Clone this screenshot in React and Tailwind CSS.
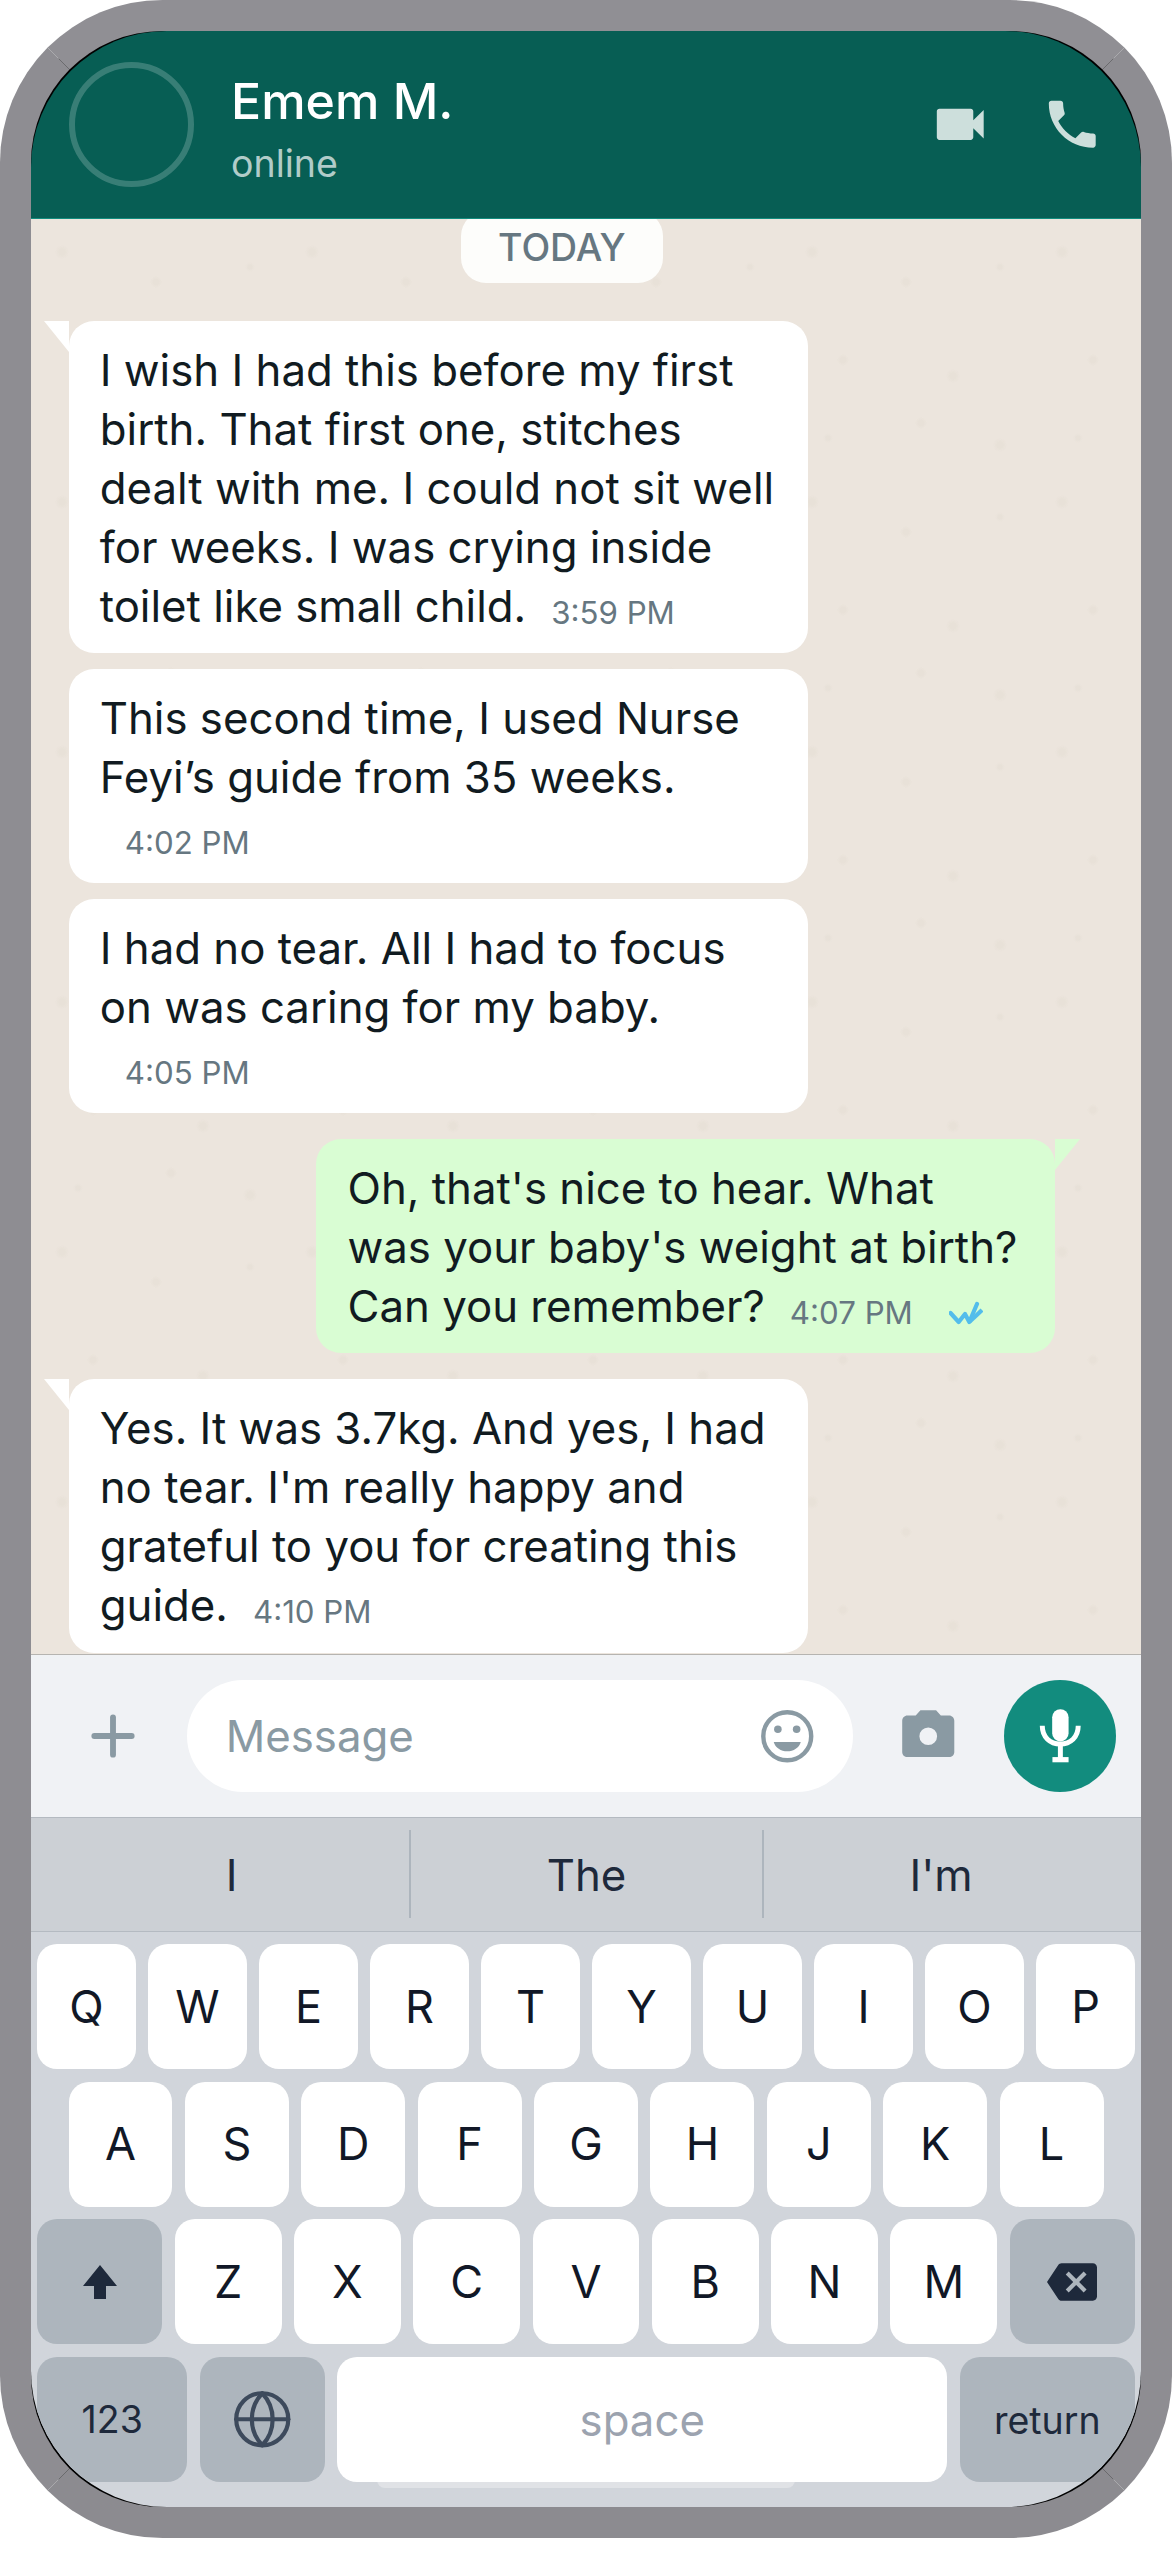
import React from "react";
import { Globe, Plus } from "lucide-react";

function VideoIcon() {
  return (
    <svg viewBox="0 0 24 24" className="w-[62.5px] h-[62.5px] fill-[#cddfdc]">
      <path d="M17 10.5V7c0-.55-.45-1-1-1H4c-.55 0-1 .45-1 1v10c0 .55.45 1 1 1h12c.55 0 1-.45 1-1v-3.5l4 4v-11l-4 4z" />
    </svg>
  );
}
function PhoneIcon() {
  return (
    <svg viewBox="0 0 24 24" className="w-[62.5px] h-[62.5px] fill-[#cddfdc]">
      <path d="M6.62 10.79c1.44 2.83 3.76 5.14 6.59 6.59l2.2-2.2c.27-.27.67-.36 1.02-.24 1.12.37 2.33.57 3.57.57.55 0 1 .45 1 1V20c0 .55-.45 1-1 1-9.39 0-17-7.61-17-17 0-.55.45-1 1-1h3.5c.55 0 1 .45 1 1 0 1.25.2 2.45.57 3.57.11.35.03.74-.25 1.01l-2.2 2.2z" />
    </svg>
  );
}
function SmileIcon() {
  return (
    <svg viewBox="0 0 24 24" className="w-[62.5px] h-[62.5px]">
      <circle cx="12" cy="12" r="9.2" fill="none" stroke="#8a9aa3" strokeWidth="1.7" />
      <circle cx="8.4" cy="9.3" r="1.45" fill="#8a9aa3" />
      <circle cx="15.6" cy="9.3" r="1.45" fill="#8a9aa3" />
      <path d="M6.8 14.2h10.4c-.6 2.2-2.8 3.6-5.2 3.6s-4.6-1.4-5.2-3.6z" fill="#8a9aa3" />
    </svg>
  );
}
function CameraIcon() {
  return (
    <svg viewBox="0 0 24 24" className="w-[62.5px] h-[62.5px] fill-[#8a9aa3]">
      <path
        fillRule="evenodd"
        d="M9 2L7.17 4H4c-1.1 0-2 .9-2 2v12c0 1.1.9 2 2 2h16c1.1 0 2-.9 2-2V6c0-1.1-.9-2-2-2h-3.17L15 2H9zM12 8.6a3.4 3.4 0 1 1 0 6.8 3.4 3.4 0 0 1 0-6.8z"
      />
    </svg>
  );
}
function MicIcon() {
  return (
    <svg viewBox="0 0 24 24" className="w-[62.5px] h-[62.5px]">
      <rect x="8.9" y="1.6" width="6.3" height="12.4" rx="3.15" fill="#fff" />
      <path d="M5.1 8c0 4.4 3 7 6.9 7s6.9-2.6 6.9-7" fill="none" stroke="#fff" strokeWidth="1.9" />
      <rect x="11.1" y="15" width="1.9" height="5.5" fill="#fff" />
      <rect x="9" y="20" width="6.2" height="2" fill="#fff" />
    </svg>
  );
}
function ShiftIcon() {
  return (
    <svg viewBox="0 0 50 50" className="w-[50px] h-[50px] fill-[#1e293b]">
      <path d="M25 8L42 29H31V42H19V29H8z" />
    </svg>
  );
}
function BackspaceIcon() {
  return (
    <svg viewBox="0 0 24 24" className="w-[50px] h-[50px] fill-[#1e293b]">
      <path d="M22 3H7c-.69 0-1.23.35-1.59.88L0 12l5.41 8.11c.36.53.9.89 1.59.89h15c1.1 0 2-.9 2-2V5c0-1.1-.9-2-2-2zm-3 12.59L17.59 17 14 13.41 10.41 17 9 15.59 12.59 12 9 8.41 10.41 7 14 10.59 17.59 7 19 8.41 15.41 12 19 15.59z" />
    </svg>
  );
}
function Ticks() {
  return (
    <svg viewBox="0 0 34 24" className="inline-block ml-[36px] w-[34px] h-[24px] align-[-3px]">
      <path d="M1.5 12L9.7 21L16 13L20.3 21L28 3" fill="none" stroke="#53bdeb" strokeWidth="4.2" strokeLinecap="round" strokeLinejoin="round" />
      <path d="M20.3 21L33 9" fill="none" stroke="#53bdeb" strokeWidth="4.2" />
    </svg>
  );
}

function Time({ children }) {
  return (
    <span className="inline-block whitespace-nowrap ml-[25px] text-[31.25px] leading-none align-[-2px] text-[#667781]">
      {children}
    </span>
  );
}

function Bubble({ children, out, tail, className }) {
  return (
    <div className={`relative w-[739px] shrink-0 rounded-[25px] px-[31.25px] pt-[19.75px] pb-[17.3px] text-[43.75px] leading-[59px] text-[#111b21] ${out ? "self-end bg-[#d9fdd3]" : "self-start bg-white"} ${className}`}>
      {tail && !out && (
        <div className="absolute top-0 left-[-25px] w-0 h-0 border-t-[31.25px] border-t-white border-l-[25px] border-l-transparent" />
      )}
      {tail && out && (
        <div className="absolute top-0 right-[-25px] w-0 h-0 border-t-[31.25px] border-t-[#d9fdd3] border-r-[25px] border-r-transparent" />
      )}
      {children}
    </div>
  );
}

function Key({ children, className = "" }) {
  return (
    <div className={`relative z-10 h-[125px] rounded-[20px] flex items-center justify-center ${className}`}>
      {children}
    </div>
  );
}
function Letter({ c }) {
  return <Key className="flex-1 bg-white text-[45px] text-[#111827]">{c}</Key>;
}

export default function App() {
  return (
    <div className="w-[1172px] h-[2537.5px] bg-white font-['Inter',sans-serif]">
      <div className="w-full h-full rounded-[162.5px] border-[31.25px] border-t-[#908f94] border-x-[#8e8d92] border-b-[#8c8b90] bg-black">
        <div className="w-full h-full rounded-[136px] overflow-hidden flex flex-col">
          <header className="h-[187.5px] shrink-0 bg-[#075e54] border-b-[1px] border-[#128c7e] flex items-center px-[37.5px] gap-[37.5px]">
            <div className="w-[125px] h-[125px] rounded-full border-[6px] border-white/20 shrink-0" />
            <div className="flex-1 flex flex-col pt-[3px]">
              <div className="text-[50px] leading-[76.5px] font-medium text-white">Emem M.</div>
              <div className="text-[37.5px] leading-[50px] text-white/70">online</div>
            </div>
            <div className="flex items-center gap-[50px]">
              <VideoIcon />
              <PhoneIcon />
            </div>
          </header>

          <main className="flex-1 min-h-0 overflow-hidden flex flex-col justify-end pb-[1.5px] pl-[37.5px] pr-[85.75px] bg-[#ece5dd] bg-[radial-gradient(circle_at_31px_33px,#e8e1d8_3px,transparent_7px),radial-gradient(circle_at_219px_48px,#e8e1d8_2px,transparent_5px),radial-gradient(circle_at_125px_63px,#e8e1d8_3px,transparent_6px),radial-gradient(circle_at_62px_141px,#e8e1d8_3px,transparent_6px),radial-gradient(circle_at_172px_157px,#e8e1d8_3px,transparent_7px),radial-gradient(circle_at_140px_204px,#e8e1d8_3px,transparent_6px),radial-gradient(circle_at_47px_219px,#e8e1d8_2px,transparent_5px),radial-gradient(circle_at_219px_226px,#e8e1d8_3px,transparent_7px)] bg-[length:250px_250px]">
            <div className="self-center shrink-0 w-[202px] h-[72px] pt-[2px] rounded-[25px] bg-[#fdfdfb] flex items-center justify-center text-[37.5px] font-medium text-[#667781] mb-[38px]">
              TODAY
            </div>
            <Bubble tail className="mb-[16px]">
              I wish I had this before my first birth. That first one, stitches dealt with me. I could not sit well for weeks. I was crying inside toilet like small child.<Time>3:59 PM</Time>
            </Bubble>
            <Bubble className="mb-[16px]">
              This second time, I used Nurse Feyi’s guide from 35 weeks.<br /><Time>4:02 PM</Time>
            </Bubble>
            <Bubble className="mb-[26px]">
              I had no tear. All I had to focus on was caring for my baby.<br /><Time>4:05 PM</Time>
            </Bubble>
            <Bubble out tail className="mb-[26px]">
              Oh, that's nice to hear. What was your baby's weight at birth? Can you remember?<Time>4:07 PM</Time><Ticks />
            </Bubble>
            <Bubble tail>
              Yes. It was 3.7kg. And yes, I had no tear. I'm really happy and grateful to you for creating this guide.<Time>4:10 PM</Time>
            </Bubble>
          </main>

          <div className="h-[162.5px] shrink-0 bg-[#f0f2f5] border-t-[1.5px] border-[#b6b4b0] flex items-center pr-[25px]">
            <div className="w-[156.25px] flex justify-center pl-[8px] shrink-0 text-[#8a9aa3]">
              <Plus size={64} strokeWidth={2.2} />
            </div>
            <div className="w-[665.5px] h-[112.5px] rounded-full bg-white flex items-center pl-[38.5px] pr-[34px] justify-between text-[43.75px] text-[#8a9aa3] shrink-0">
              <span className="pt-[3px]">Message</span>
              <SmileIcon />
            </div>
            <div className="flex-1 flex justify-center">
              <CameraIcon />
            </div>
            <div className="w-[112.5px] h-[112.5px] rounded-full bg-[#128c7e] flex items-center justify-center shrink-0">
              <MicIcon />
            </div>
          </div>

          <div className="h-[115px] shrink-0 bg-[#ccd0d5] border-y-[1.5px] border-y-[#b4bac1] flex items-center text-[43.75px] text-[#1e293b]">
            <div className="w-[378px] h-[88px] pt-[3px] pl-[23px] flex items-center justify-center">I</div>
            <div className="flex-1 h-[88px] pt-[3px] border-x-[2px] border-[#adb5bd] flex items-center justify-center">The</div>
            <div className="w-[377px] h-[88px] pt-[3px] pr-[23px] flex items-center justify-center">I'm</div>
          </div>

          <div className="relative h-[575px] shrink-0 bg-[#d1d5db] px-[6.25px] pt-[12.5px] flex flex-col gap-[12.5px]">
            <div className="flex gap-[12.5px]">
              {"QWERTYUIOP".split("").map((c) => <Letter key={c} c={c} />)}
            </div>
            <div className="flex gap-[12.5px] px-[31.25px]">
              {"ASDFGHJKL".split("").map((c) => <Letter key={c} c={c} />)}
            </div>
            <div className="flex gap-[12.5px]">
              <Key className="w-[125px] shrink-0 bg-[#adb5bd]"><ShiftIcon /></Key>
              {"ZXCVBNM".split("").map((c) => <Letter key={c} c={c} />)}
              <Key className="w-[125px] shrink-0 bg-[#adb5bd]"><BackspaceIcon /></Key>
            </div>
            <div className="flex gap-[12.5px]">
              <Key className="w-[150px] shrink-0 bg-[#adb5bd] pt-[3px] text-[37.5px] text-[#1e293b]">123</Key>
              <Key className="w-[125px] shrink-0 bg-[#adb5bd] text-[#3d4a5c]"><Globe size={62.5} strokeWidth={1.6} /></Key>
              <Key className="flex-1 bg-white pt-[3px] text-[43.75px] text-[#9ca3af]">space</Key>
              <Key className="w-[175px] shrink-0 bg-[#adb5bd] pt-[4px] text-[37.5px] text-[#1e293b]">return</Key>
            </div>
            <div className="absolute left-[346px] bottom-[18.75px] w-[418px] h-[16px] rounded-full bg-[#e0e2e6]" />
          </div>
        </div>
      </div>
    </div>
  );
}
